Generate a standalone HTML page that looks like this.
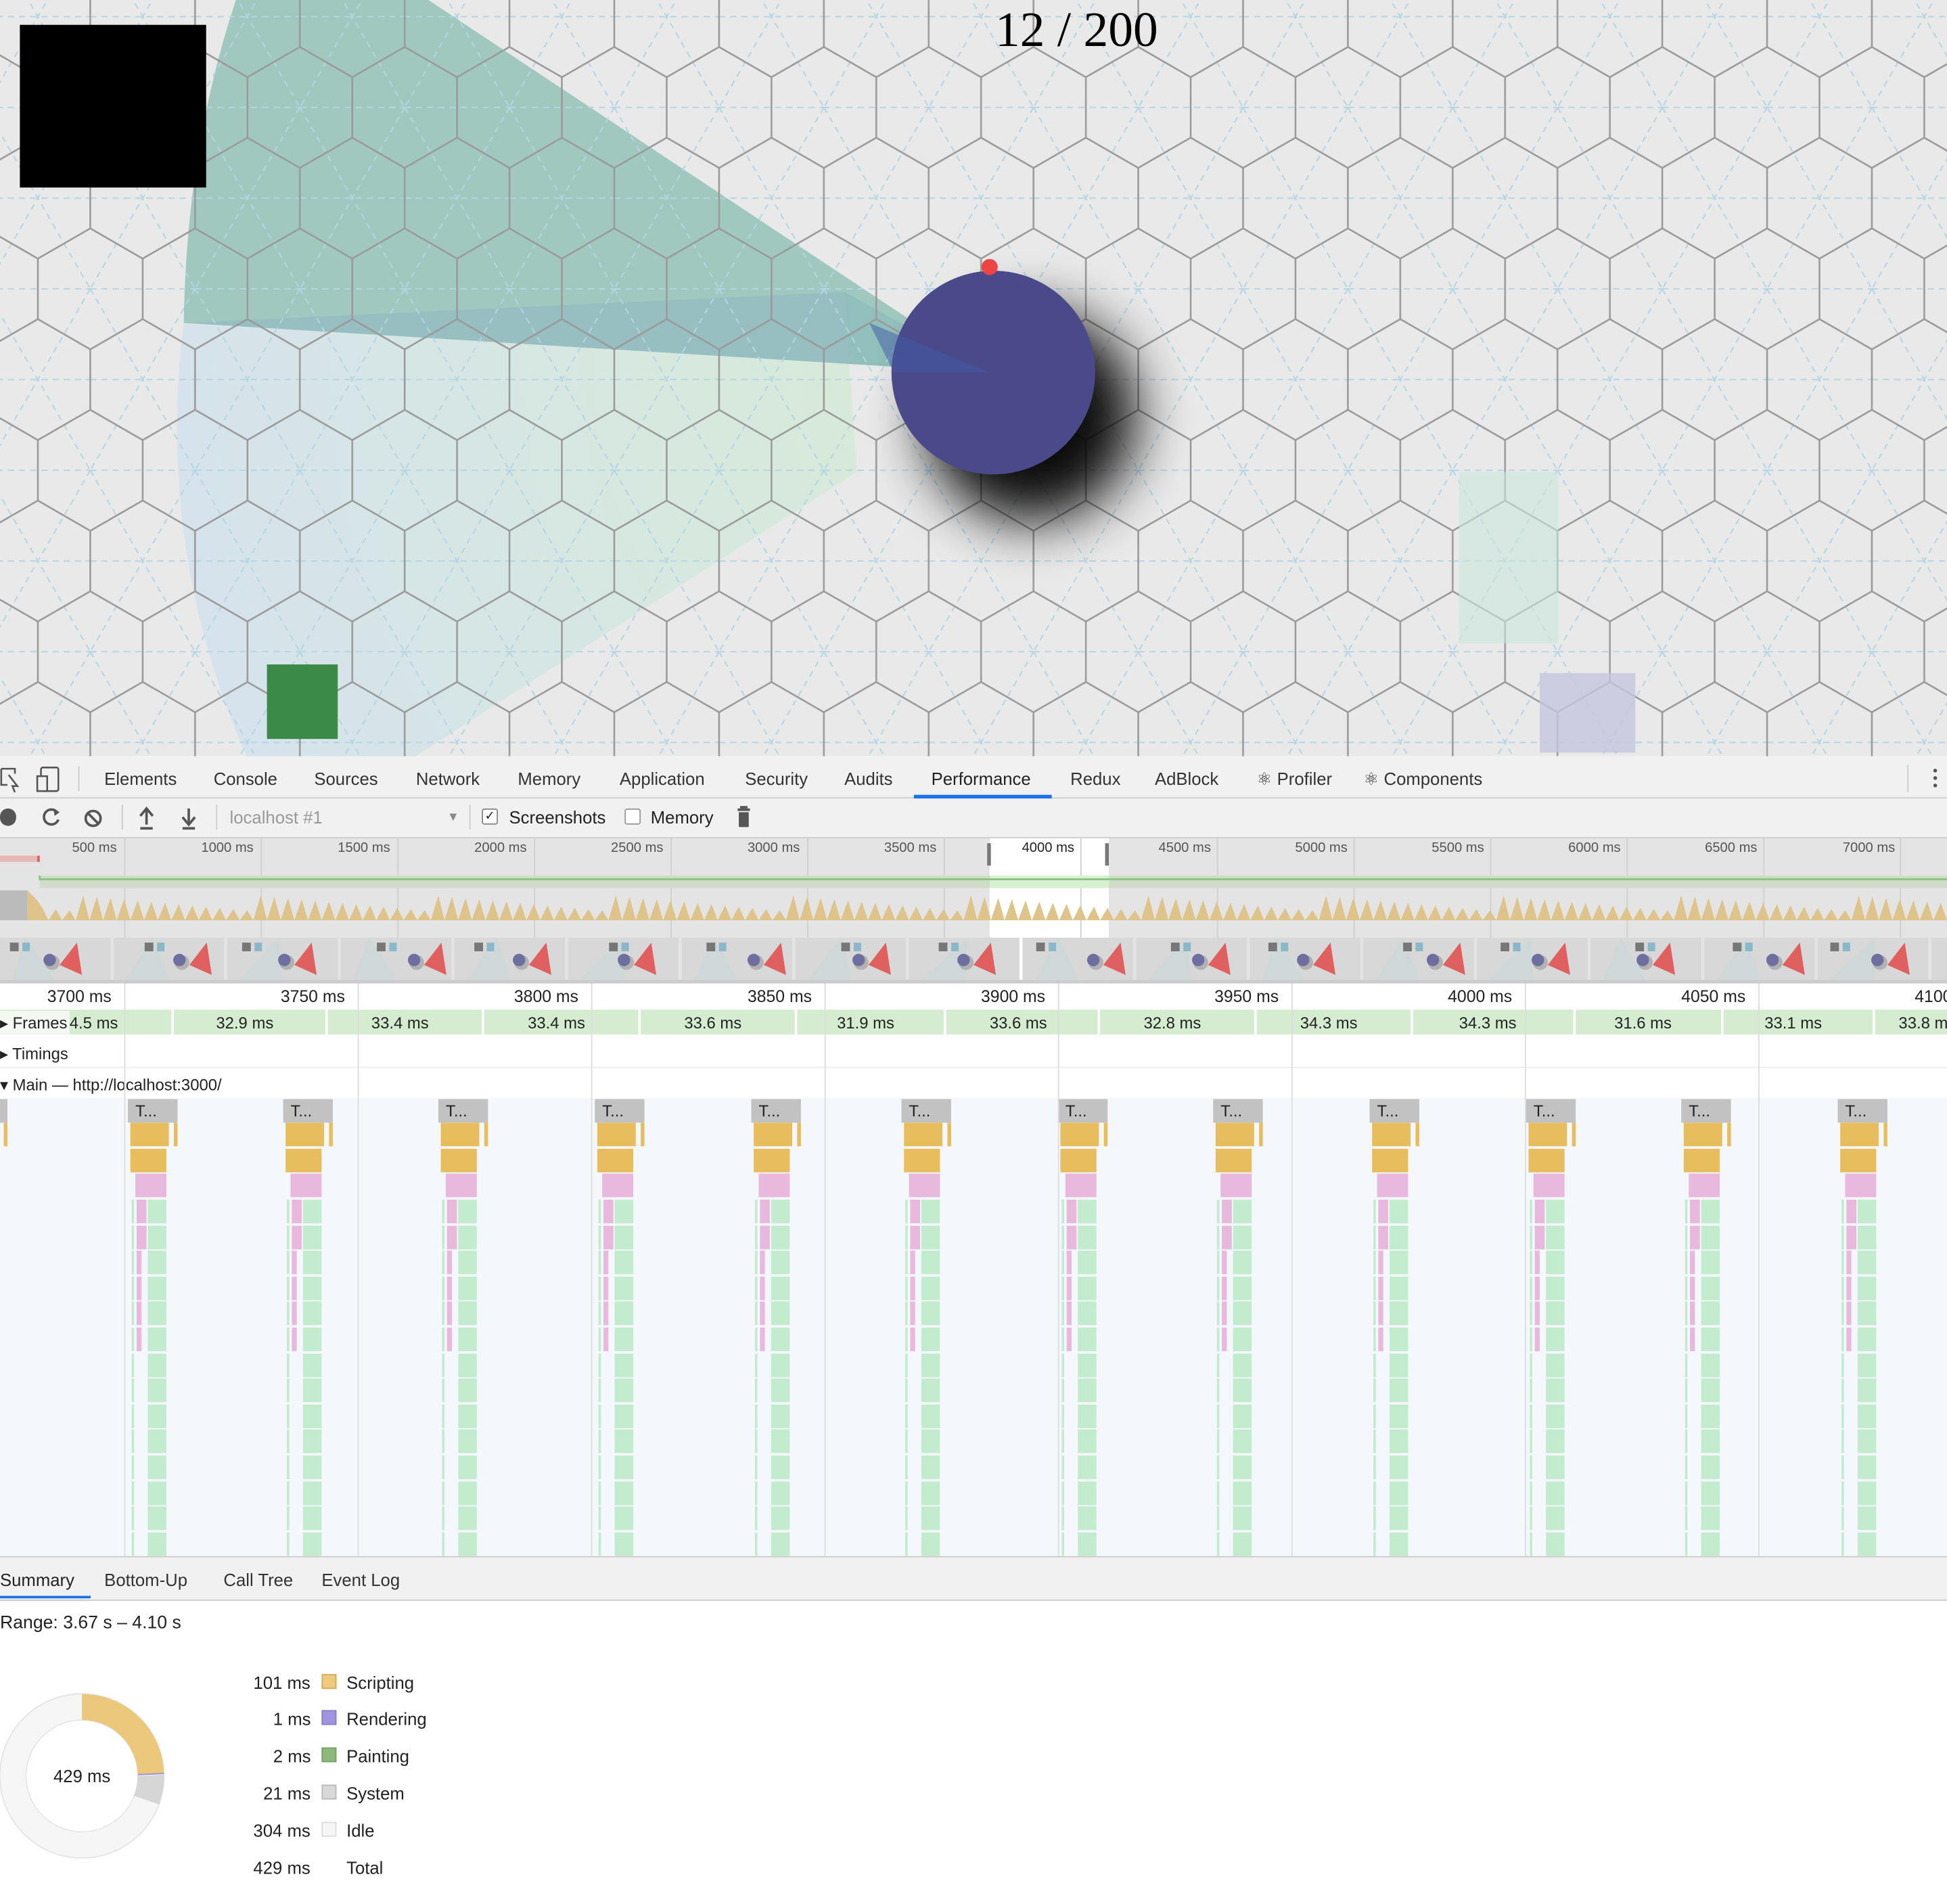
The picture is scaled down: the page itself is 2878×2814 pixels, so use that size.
<!DOCTYPE html>
<html><head><meta charset="utf-8"><style>
html,body{margin:0;padding:0;background:#fff;overflow:hidden}
#root{position:absolute;left:0;top:0;width:1568px;height:1533px;transform:scale(1.83546);transform-origin:0 0;font-family:"Liberation Sans",sans-serif;color:#222;overflow:hidden}
.a{position:absolute;white-space:nowrap}
.tab{position:absolute;top:619px;font-size:14px;color:#333}
.lbl{position:absolute;font-size:11px;color:#555}
.rl{position:absolute;font-size:13.5px;color:#222;white-space:nowrap}
.fr{position:absolute;top:816px;font-size:13px;color:#222;white-space:nowrap}
.tk{position:absolute;top:885px;width:40px;height:19px;background:#c2c2c2;font-size:13px;color:#222;text-indent:6px;line-height:19px}
.leg{position:absolute;font-size:14px;color:#222}
.sw{position:absolute;width:12px;height:12px;box-sizing:border-box}
</style></head><body><div id="root">
<svg class="a" style="left:0;top:0" width="1568" height="609">
<defs>
<pattern id="hx" width="84.4" height="146.1" patternUnits="userSpaceOnUse" patternTransform="translate(72.7,86.5)">
<g fill="none" stroke="#b3d5e4" stroke-width="1.1" stroke-dasharray="5 4">
<path d="M0,0H84.4M0,73.05H84.4M0,146.1H84.4M0,0L84.4,146.1M84.4,0L0,146.1"/>
</g>
<g fill="none" stroke="#9a9a9a" stroke-width="1.4">
<path d="M42.2,0V24.35L0,48.7M42.2,24.35L84.4,48.7M0,48.7V97.4L42.2,121.75L84.4,97.4M84.4,48.7V97.4M42.2,121.75V146.1"/>
</g>
</pattern>
<radialGradient id="cg" cx="797" cy="300" r="650" gradientUnits="userSpaceOnUse"><stop offset="0" stop-color="#d4ecd2"/><stop offset="1" stop-color="#d3e2ec"/></radialGradient>
<filter id="bl" x="-50%" y="-50%" width="200%" height="200%"><feGaussianBlur stdDeviation="22"/></filter>
</defs>
<rect width="1568" height="609" fill="#e9e9e9"/>
<path d="M797,300 L680,235 L690,380 L330,612 L200,612 A650,650 0 0 1 148,260 Z" fill="url(#cg)" opacity="0.85"/>
<path d="M797,300 L345,0 L190,0 Q150,120 148,260 Z" fill="#5aa896" opacity="0.5"/>
<path d="M797,300 L680,235 L148,260 Z" fill="#7aa4c8" opacity="0.25"/>
<rect width="1568" height="609" fill="url(#hx)"/>
<rect x="1175" y="380" width="80" height="138" fill="#cce6de" opacity="0.6"/>
<rect x="1240" y="542" width="77" height="64" fill="#c6c6de" opacity="0.8"/>
<rect x="16" y="20" width="150" height="131" fill="#000"/>
<rect x="215" y="535" width="57" height="60" fill="#3b8a48"/>
<circle cx="830" cy="335" r="85" fill="#000" filter="url(#bl)" opacity="0.95"/>
<circle cx="800" cy="300" r="82" fill="#4a4a8b"/>
<path d="M797,300 L700,260 L720,300 Z" fill="#3f5aa5" opacity="0.5"/>
<circle cx="797" cy="215" r="6.5" fill="#ee4444"/>
<text x="867" y="37" text-anchor="middle" font-family="Liberation Serif,serif" font-size="40" fill="#000">12 / 200</text>
</svg>
<div class="a" style="left:0;top:609px;width:1568px;height:33px;background:#f1f1f1;border-bottom:1px solid #ccc"></div>
<svg class="a" style="left:0;top:616px" width="60" height="24"><path d="M1,3H12V7M1,3V16H6M7,8L14,17L10,17L12,22" fill="none" stroke="#555" stroke-width="1.4"/><rect x="33" y="2" width="14" height="19" rx="1.5" fill="none" stroke="#555" stroke-width="1.4"/><rect x="30" y="9" width="8" height="12" fill="#f1f1f1" stroke="#555" stroke-width="1.4"/></svg>
<div class="a" style="left:63px;top:617px;width:1px;height:20px;background:#ccc"></div>
<div class="tab" style="left:84px">Elements</div>
<div class="tab" style="left:172px">Console</div>
<div class="tab" style="left:253px">Sources</div>
<div class="tab" style="left:335px">Network</div>
<div class="tab" style="left:417px">Memory</div>
<div class="tab" style="left:499px">Application</div>
<div class="tab" style="left:600px">Security</div>
<div class="tab" style="left:680px">Audits</div>
<div class="tab" style="left:750px;color:#222">Performance</div>
<div class="a" style="left:736px;top:640px;width:111px;height:3px;background:#1a73e8"></div>
<div class="tab" style="left:862px">Redux</div>
<div class="tab" style="left:930px">AdBlock</div>
<div class="tab" style="left:1012px">⚛ Profiler</div>
<div class="tab" style="left:1098px">⚛ Components</div>
<div class="a" style="left:1536px;top:616px;width:1px;height:22px;background:#ccc"></div>
<div class="a" style="left:1557px;top:619px;width:3px;height:3px;border-radius:2px;background:#555;box-shadow:0 6px 0 #555,0 12px 0 #555"></div>
<div class="a" style="left:0;top:643px;width:1568px;height:31px;background:#f1f1f1;border-bottom:1px solid #ccc"></div>
<div class="a" style="left:0;top:651px;width:13px;height:14px;border-radius:7px;background:#555"></div>
<svg class="a" style="left:30px;top:648px" width="140" height="22"><path d="M16,6A6,6 0 1 0 17,12" fill="none" stroke="#555" stroke-width="2"/><path d="M13,3L18,6L14,9Z" fill="#555"/><circle cx="45" cy="11" r="6" fill="none" stroke="#555" stroke-width="2"/><path d="M41,7L49,15" stroke="#555" stroke-width="2"/><path d="M88,4V16M83,9L88,3L93,9M83,19H93" fill="none" stroke="#555" stroke-width="2"/><path d="M122,3V15M117,10L122,16L127,10M117,19H127" fill="none" stroke="#555" stroke-width="2"/></svg>
<div class="a" style="left:98px;top:648px;width:1px;height:20px;background:#ccc"></div>
<div class="a" style="left:174px;top:648px;width:1px;height:20px;background:#ccc"></div>
<div class="a" style="left:185px;top:650px;font-size:14px;color:#999">localhost #1</div>
<div class="a" style="left:360px;top:653px;font-size:10px;color:#888">▼</div>
<div class="a" style="left:378px;top:648px;width:1px;height:20px;background:#ccc"></div>
<div class="a" style="left:388px;top:651px;width:11px;height:11px;border:1px solid #888;border-radius:2px;background:#fff;font-size:10px;line-height:11px;text-align:center">✓</div>
<div class="a" style="left:410px;top:650px;font-size:14px;color:#222">Screenshots</div>
<div class="a" style="left:503px;top:651px;width:11px;height:11px;border:1px solid #999;border-radius:2px;background:#fff"></div>
<div class="a" style="left:524px;top:650px;font-size:14px;color:#222">Memory</div>
<div class="a" style="left:594px;top:651px;width:10px;height:2px;background:#555"></div>
<div class="a" style="left:596px;top:649px;width:6px;height:2px;background:#555"></div>
<div class="a" style="left:595px;top:654px;width:8px;height:12px;background:#555;border-radius:0 0 1px 1px"></div>
<div class="a" style="left:0;top:675px;width:1568px;height:117px;background:#e4e4e4"></div>
<div class="a" style="left:797px;top:675px;width:96px;height:117px;background:#fff"></div>
<div id="ovl"></div>
<div class="lbl" style="left:58px;top:677px">500 ms</div>
<div class="lbl" style="left:162px;top:677px">1000 ms</div>
<div class="lbl" style="left:272px;top:677px">1500 ms</div>
<div class="lbl" style="left:382px;top:677px">2000 ms</div>
<div class="lbl" style="left:492px;top:677px">2500 ms</div>
<div class="lbl" style="left:602px;top:677px">3000 ms</div>
<div class="lbl" style="left:712px;top:677px">3500 ms</div>
<div class="lbl" style="left:823px;top:677px;color:#222">4000 ms</div>
<div class="lbl" style="left:933px;top:677px">4500 ms</div>
<div class="lbl" style="left:1043px;top:677px">5000 ms</div>
<div class="lbl" style="left:1153px;top:677px">5500 ms</div>
<div class="lbl" style="left:1263px;top:677px">6000 ms</div>
<div class="lbl" style="left:1373px;top:677px">6500 ms</div>
<div class="lbl" style="left:1484px;top:677px">7000 ms</div>
<svg class="a" style="left:0;top:675px" width="1568" height="117" id="ovs">
<rect x="0" y="14" width="32" height="5" fill="#e8b8b8"/><rect x="30" y="14" width="2" height="5" fill="#e06060"/>
<rect x="32" y="30" width="1536" height="10" fill="#cfdcc8"/>
<rect x="797" y="30" width="96" height="10" fill="#d6f0d0"/>
<path d="M32,30V33H1568" stroke="#8bc27f" stroke-width="1.5" fill="none"/>
<rect x="0" y="42" width="22" height="24" fill="#bbb"/>
<path id="cpu" fill="#dec38a"/>
<rect x="795" y="4" width="3" height="18" fill="#777"/><rect x="890" y="4" width="3" height="18" fill="#777"/>
<rect x="0" y="114" width="1568" height="3" fill="#ccc"/>
</svg>
<div class="a" style="left:0;top:792px;width:1568px;height:21px;background:#fff"></div>
<div id="grid"></div>
<div class="rl" style="left:38px;top:795px">3700 ms</div>
<div class="rl" style="left:226px;top:795px">3750 ms</div>
<div class="rl" style="left:414px;top:795px">3800 ms</div>
<div class="rl" style="left:602px;top:795px">3850 ms</div>
<div class="rl" style="left:790px;top:795px">3900 ms</div>
<div class="rl" style="left:978px;top:795px">3950 ms</div>
<div class="rl" style="left:1166px;top:795px">4000 ms</div>
<div class="rl" style="left:1354px;top:795px">4050 ms</div>
<div class="rl" style="left:1542px;top:795px">4100 ms</div>
<div class="a" style="left:0;top:813px;width:1568px;height:20px;background:#d5ecd0"></div>
<div id="frb"></div>
<div class="fr" style="left:56px">4.5 ms</div>
<div class="fr" style="left:174px">32.9 ms</div>
<div class="fr" style="left:299px">33.4 ms</div>
<div class="fr" style="left:425px">33.4 ms</div>
<div class="fr" style="left:551px">33.6 ms</div>
<div class="fr" style="left:674px">31.9 ms</div>
<div class="fr" style="left:797px">33.6 ms</div>
<div class="fr" style="left:921px">32.8 ms</div>
<div class="fr" style="left:1047px">34.3 ms</div>
<div class="fr" style="left:1175px">34.3 ms</div>
<div class="fr" style="left:1300px">31.6 ms</div>
<div class="fr" style="left:1421px">33.1 ms</div>
<div class="fr" style="left:1529px">33.8 ms</div>
<div class="a" style="left:0;top:814px;width:56px;height:19px;background:#f4f8f2"></div>
<div class="a" style="left:0;top:816px;font-size:13px">▸ Frames</div>
<div class="a" style="left:0;top:841px;font-size:13px">▸ Timings</div>
<div class="a" style="left:0;top:859px;width:1568px;height:1px;background:#eee"></div>
<div class="a" style="left:0;top:866px;font-size:13px">▾ Main — http://localhost:3000/</div>
<div class="a" style="left:0;top:884px;width:1568px;height:369px;background:#f4f7fc"></div>
<div id="fl"></div>
<div class="tk" style="left:-34px">T...</div>
<div class="tk" style="left:103px">T...</div>
<div class="tk" style="left:228px">T...</div>
<div class="tk" style="left:353px">T...</div>
<div class="tk" style="left:479px">T...</div>
<div class="tk" style="left:605px">T...</div>
<div class="tk" style="left:726px">T...</div>
<div class="tk" style="left:852px">T...</div>
<div class="tk" style="left:977px">T...</div>
<div class="tk" style="left:1103px">T...</div>
<div class="tk" style="left:1229px">T...</div>
<div class="tk" style="left:1354px">T...</div>
<div class="tk" style="left:1480px">T...</div>
<div class="a" style="left:0;top:1253px;width:1568px;height:34px;background:#f1f1f1;border-top:1px solid #ccc;border-bottom:1px solid #ccc"></div>
<div class="a" style="left:0;top:1264px;font-size:14px">Summary</div>
<div class="a" style="left:84px;top:1264px;font-size:14px;color:#333">Bottom-Up</div>
<div class="a" style="left:180px;top:1264px;font-size:14px;color:#333">Call Tree</div>
<div class="a" style="left:259px;top:1264px;font-size:14px;color:#333">Event Log</div>
<div class="a" style="left:0;top:1285px;width:73px;height:2px;background:#1a73e8"></div>
<div class="a" style="left:0;top:1299px;font-size:14.5px">Range: 3.67 s – 4.10 s</div>
<svg class="a" style="left:0;top:1360px" width="140" height="140">
<circle cx="66" cy="70" r="56" fill="none" stroke="#f6f6f6" stroke-width="22"/>
<circle cx="66" cy="70" r="66" fill="none" stroke="#ddd" stroke-width="0.6"/>
<circle cx="66" cy="70" r="45" fill="#fff" stroke="#ddd" stroke-width="0.6"/>
<path d="M66,4A66,66 0 0 1 132,68L111,69A45,45 0 0 0 66,25Z" fill="#ecc87c"/>
<path d="M132,69A66,66 0 0 1 128,93L108,86A45,45 0 0 0 111,70Z" fill="#d6d6d6"/>
<path d="M111,69L132,68" stroke="#9a8fd8" stroke-width="1"/>
<text x="66" y="75" text-anchor="middle" font-size="14" font-family="Liberation Sans,sans-serif" fill="#222">429 ms</text>
</svg>
<div class="leg" style="left:204px;top:1347px">101 ms</div><div class="sw" style="left:259px;top:1348px;background:#efca7c;border:1px solid #d0ad60"></div><div class="leg" style="left:279px;top:1347px">Scripting</div>
<div class="leg" style="left:220px;top:1376px">1 ms</div><div class="sw" style="left:259px;top:1377px;background:#9f94e0;border:1px solid #8a7fc8"></div><div class="leg" style="left:279px;top:1376px">Rendering</div>
<div class="leg" style="left:220px;top:1406px">2 ms</div><div class="sw" style="left:259px;top:1407px;background:#8db97c;border:1px solid #76a265"></div><div class="leg" style="left:279px;top:1406px">Painting</div>
<div class="leg" style="left:212px;top:1436px">21 ms</div><div class="sw" style="left:259px;top:1437px;background:#d8d8d8;border:1px solid #bbb"></div><div class="leg" style="left:279px;top:1436px">System</div>
<div class="leg" style="left:204px;top:1466px">304 ms</div><div class="sw" style="left:259px;top:1467px;background:#f6f6f6;border:1px solid #ddd"></div><div class="leg" style="left:279px;top:1466px">Idle</div>
<div class="leg" style="left:204px;top:1496px">429 ms</div><div class="leg" style="left:279px;top:1496px">Total</div>
</div>
<script>
function d(p,s){var e=document.createElement('div');e.className='a';e.style.cssText=s;document.getElementById(p).appendChild(e);}
for(var x=100;x<1568;x+=110)d('ovl','left:'+x+'px;top:675px;width:1px;height:80px;background:#d0d0d0');
var p='M0,66L22,66L22,42L30,50';for(var x=30;x<1568;x+=11){var h=8+((x*7)%13);p+=' L'+(x+4)+','+(66-h)+' L'+(x+9)+',66';}p+=' L1568,66Z';
document.getElementById('cpu').setAttribute('d',p);
var sv=document.getElementById('ovs'),ns='http://www.w3.org/2000/svg';
function el(t,a){var e=document.createElementNS(ns,t);for(var k in a)e.setAttribute(k,a[k]);sv.appendChild(e);}
for(var i=0;i<18;i++){var x=i*91.5;el('rect',{x:x,y:80,width:89,height:34,fill:'#d8d8d8'});
el('path',{d:'M'+(x+20+(i*11)%30)+',80 L'+(x+45)+',114 L'+(x+10)+',114Z',fill:'#c8d8d8',opacity:'0.6'});
var cx=x+40+((i*13)%20);el('circle',{cx:cx+2,cy:100,r:6,fill:'#555',opacity:'0.3'});el('circle',{cx:cx,cy:98,r:5,fill:'#6e6ea0'});
el('path',{d:'M'+(cx+22)+',84 L'+(cx+26)+',110 L'+(cx+8)+',102Z',fill:'#e06060'});
el('rect',{x:x+8+((i*17)%30),y:84,width:7,height:7,fill:'#777'});el('rect',{x:x+18+((i*17)%30),y:84,width:6,height:7,fill:'#8ab8c8'});}
[100,288,476,664,852,1040,1228,1416].forEach(function(x){d('grid','left:'+x+'px;top:792px;width:1px;height:461px;background:#ddd;z-index:1')});
[138,262,388,514,640,760,884,1010,1136,1267,1386,1508].forEach(function(x){d('frb','left:'+x+'px;top:813px;width:2px;height:20px;background:#fff')});
[-34,103,228,353,479,605,726,852,977,1103,1229,1354,1480].forEach(function(x){
d('fl','left:'+(x+2)+'px;top:904px;width:31px;height:19px;background:#e8bd5e');
d('fl','left:'+(x+37)+'px;top:904px;width:3px;height:19px;background:#e8bd5e');
d('fl','left:'+(x+2)+'px;top:925px;width:29px;height:19px;background:#e8bd5e');
d('fl','left:'+(x+6)+'px;top:945px;width:25px;height:19px;background:#e8b9dc');
for(var y=966;y<1250;y+=20.6){
d('fl','left:'+(x+3)+'px;top:'+y+'px;width:2px;height:19px;background:#c3ecce');
d('fl','left:'+(x+16)+'px;top:'+y+'px;width:15px;height:19px;background:#c3ecce');
if(y<1070)d('fl','left:'+(x+7)+'px;top:'+y+'px;width:'+(y<990?8:4)+'px;height:19px;background:#e8b9dc');
}});
</script>
</body></html>
